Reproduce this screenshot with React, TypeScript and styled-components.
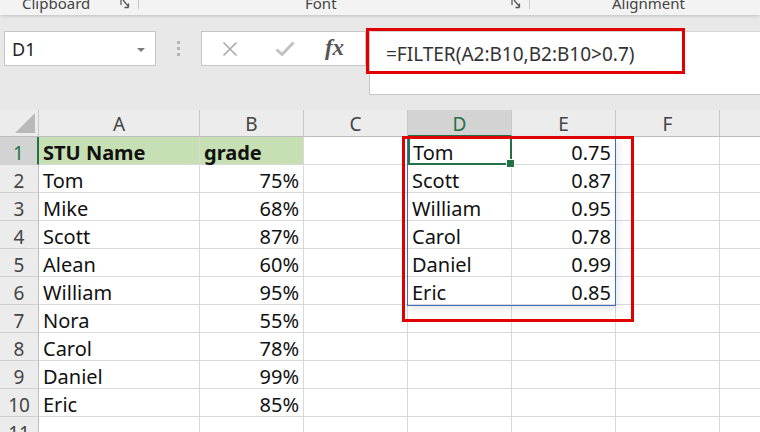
import styled, { createGlobalStyle } from "styled-components";

const GlobalStyle = createGlobalStyle`
  html, body {
    margin: 0;
    padding: 0;
    width: 760px;
    height: 432px;
    overflow: hidden;
    background: #ffffff;
  }
  * {
    box-sizing: border-box;
  }
`;

const FONT = `"Noto Sans", "Open Sans", sans-serif`;
const GREEN = "#217346";

const Page = styled.div`
  position: relative;
  width: 760px;
  height: 432px;
  overflow: hidden;
  font-family: ${FONT};
  background: #e8e8e8;
`;

/* ---------- ribbon group labels ---------- */

const RibbonStrip = styled.div`
  height: 15px;
  display: flex;
  overflow: hidden;
  background: #f3f3f3;
  box-shadow: 0 1px 3px rgba(0, 0, 0, 0.18);
  position: relative;
  z-index: 1;
`;

const Group = styled.div<{ $width?: number; $divider?: boolean }>`
  display: flex;
  align-items: flex-start;
  width: ${(p) => (p.$width ? `${p.$width}px` : "auto")};
  flex: ${(p) => (p.$width ? "none" : "1")};
  border-right: ${(p) => (p.$divider ? "1px solid #c8c8c8" : "none")};
  height: 9px;
`;

const GroupLabel = styled.span<{ $indent: number }>`
  margin-left: ${(p) => p.$indent}px;
  margin-top: -7px;
  font-size: 15px;
  line-height: 20px;
  color: #444;
  white-space: nowrap;
`;

const Launcher = styled.svg`
  margin-left: auto;
  margin-right: 8px;
  width: 10px;
  height: 9px;
  flex: none;
`;

const DialogLauncher = () => (
  <Launcher viewBox="0 0 10 9">
    <path d="M1 0 V5" stroke="#555" strokeWidth="1.2" fill="none" />
    <path d="M3 0 L8.5 6.5 M8.5 7.5 H4.5 M8.5 7.5 V3.5" stroke="#555" strokeWidth="1.3" fill="none" />
  </Launcher>
);

/* ---------- formula bar ---------- */

const FormulaBar = styled.div`
  height: 95px;
  display: flex;
  align-items: flex-start;
  padding-top: 16px;
  background: #e8e8e8;
`;

const NameBox = styled.div`
  margin-left: 4px;
  width: 152px;
  height: 35px;
  background: #fff;
  border: 1px solid #c6c6c6;
  display: flex;
  align-items: center;
  padding: 0 10px 0 7px;
  font-size: 18px;
  color: #222;
`;

const NameText = styled.span`
  flex: 1;
`;

const DropArrow = styled.span`
  width: 0;
  height: 0;
  border-left: 4px solid transparent;
  border-right: 4px solid transparent;
  border-top: 4px solid #7a7a7a;
  margin-top: 2px;
`;

const Grip = styled.div`
  width: 45px;
  height: 35px;
  display: flex;
  flex-direction: column;
  align-items: center;
  justify-content: center;
  gap: 3px;
`;

const GripDot = styled.span`
  width: 3px;
  height: 3px;
  background: #b5b5b5;
`;

const ButtonBox = styled.div`
  width: 165px;
  height: 35px;
  background: #fff;
  border: 1px solid #c6c6c6;
  display: grid;
  grid-template-columns: 55px 55px 1fr;
  align-items: center;
  justify-items: center;
`;

const FxText = styled.span`
  font-family: "Liberation Serif", "DejaVu Serif", serif;
  font-style: italic;
  font-weight: bold;
  font-size: 23px;
  color: #555;
  margin-left: -8px;
  margin-top: -2px;
`;

const FormulaInput = styled.div`
  margin-left: 3px;
  flex: 1;
  height: 64px;
  background: #fff;
  border-left: 1px solid #c6c6c6;
  border-bottom: 1px solid #c6c6c6;
  border-top: 1px solid #d6d6d6;
  padding: 9px 0 0 16px;
  font-size: 19px;
  line-height: 26px;
  color: #333;
  white-space: nowrap;
`;

/* ---------- sheet ---------- */

const SheetWrap = styled.div`
  position: relative;
`;

const Sheet = styled.div`
  display: grid;
  grid-template-columns: 39px 161px repeat(6, 104px);
  grid-template-rows: 27px repeat(11, 28px);
  background: #fff;
  font-size: 20px;
`;

const Corner = styled.div`
  background: #ececec;
  border-right: 1px solid #c8c8c8;
  border-bottom: 1px solid #bdbdbd;
  position: relative;
  &::after {
    content: "";
    position: absolute;
    right: 3px;
    bottom: 3px;
    width: 0;
    height: 0;
    border-left: 20px solid transparent;
    border-bottom: 20px solid #b9b9b9;
  }
`;

const ColHead = styled.div<{ $active?: boolean }>`
  background: ${(p) => (p.$active ? "#d3d3d3" : "#ececec")};
  color: ${(p) => (p.$active ? GREEN : "#444")};
  border-right: 1px solid #c8c8c8;
  border-bottom: ${(p) => (p.$active ? `2px solid ${GREEN}` : "1px solid #bdbdbd")};
  display: flex;
  align-items: center;
  justify-content: center;
  font-size: 19px;
  padding-top: 2px;
`;

const RowHead = styled.div<{ $active?: boolean }>`
  background: ${(p) => (p.$active ? "#d3d3d3" : "#ececec")};
  color: ${(p) => (p.$active ? GREEN : "#444")};
  border-right: ${(p) => (p.$active ? `2px solid ${GREEN}` : "1px solid #bdbdbd")};
  border-bottom: 1px solid #cfcfcf;
  text-align: center;
  font-size: 19px;
  line-height: 28px;
  padding-top: 2px;
`;

const Cell = styled.div<{ $align?: "left" | "right"; $fill?: string; $bold?: boolean }>`
  border-right: 1px solid #d9d9d9;
  border-bottom: 1px solid #d9d9d9;
  background: ${(p) => p.$fill ?? "transparent"};
  text-align: ${(p) => p.$align ?? "left"};
  font-weight: ${(p) => (p.$bold ? 700 : 400)};
  padding: 2px 4px 0;
  line-height: 28px;
  color: #111;
  white-space: nowrap;
`;

const ActiveCell = styled(Cell)`
  position: relative;
  outline: 2px solid ${GREEN};
  outline-offset: -2px;
  padding-left: 5px;
  z-index: 2;
  &::after {
    content: "";
    position: absolute;
    right: -4px;
    bottom: -4px;
    width: 7px;
    height: 7px;
    background: ${GREEN};
    border: 1px solid #fff;
  }
`;

const SpillFrame = styled.div`
  position: absolute;
  left: 407px;
  top: 27px;
  width: 209px;
  height: 169px;
  border: 1px solid #3d6cc4;
  box-shadow: 2px 3px 8px rgba(0, 0, 0, 0.1);
  pointer-events: none;
  z-index: 1;
`;

const Callout = styled.div<{ $x: number; $y: number; $w: number; $h: number }>`
  position: absolute;
  left: ${(p) => p.$x}px;
  top: ${(p) => p.$y}px;
  width: ${(p) => p.$w}px;
  height: ${(p) => p.$h}px;
  border: 3px solid #e10000;
  z-index: 5;
  pointer-events: none;
`;

const students: [string, string][] = [
  ["Tom", "75%"],
  ["Mike", "68%"],
  ["Scott", "87%"],
  ["Alean", "60%"],
  ["William", "95%"],
  ["Nora", "55%"],
  ["Carol", "78%"],
  ["Daniel", "99%"],
  ["Eric", "85%"],
];

const filtered: [string, string][] = [
  ["Tom", "0.75"],
  ["Scott", "0.87"],
  ["William", "0.95"],
  ["Carol", "0.78"],
  ["Daniel", "0.99"],
  ["Eric", "0.85"],
];

const columns = ["A", "B", "C", "D", "E", "F", "G"];

export default function App() {
  const rows = Array.from({ length: 11 }, (_, i) => i);

  return (
    <Page>
      <GlobalStyle />
      <RibbonStrip>
        <Group $width={139} $divider>
          <GroupLabel $indent={22}>Clipboard</GroupLabel>
          <DialogLauncher />
        </Group>
        <Group $width={391} $divider>
          <GroupLabel $indent={166}>Font</GroupLabel>
          <DialogLauncher />
        </Group>
        <Group>
          <GroupLabel $indent={82}>Alignment</GroupLabel>
        </Group>
      </RibbonStrip>

      <FormulaBar>
        <NameBox>
          <NameText>D1</NameText>
          <DropArrow />
        </NameBox>
        <Grip>
          <GripDot />
          <GripDot />
          <GripDot />
        </Grip>
        <ButtonBox>
          <svg width="16" height="16" viewBox="0 0 16 16">
            <path d="M1.5 1.5 L14.5 14.5 M14.5 1.5 L1.5 14.5" stroke="#a9a9a9" strokeWidth="1.6" fill="none" />
          </svg>
          <svg width="20" height="16" viewBox="0 0 20 16">
            <path d="M1.5 8.5 L7 13.5 L18.5 1.5" stroke="#c2c2c2" strokeWidth="3" fill="none" strokeLinejoin="round" />
          </svg>
          <FxText>fx</FxText>
        </ButtonBox>
        <FormulaInput>=FILTER(A2:B10,B2:B10&gt;0.7)</FormulaInput>
      </FormulaBar>

      <SheetWrap>
        <Sheet>
          <Corner />
          {columns.map((c) => (
            <ColHead key={c} $active={c === "D"}>
              {c}
            </ColHead>
          ))}

          {rows.map((r) => {
            const student = r >= 1 && r <= 9 ? students[r - 1] : null;
            const spill = r <= 5 ? filtered[r] : null;
            const header = r === 0;
            return [
              <RowHead key={`h${r}`} $active={header}>
                {r + 1}
              </RowHead>,
              <Cell key={`a${r}`} $fill={header ? "#c6e0b4" : undefined} $bold={header}>
                {header ? "STU Name" : student?.[0]}
              </Cell>,
              <Cell
                key={`b${r}`}
                $align={header ? "left" : "right"}
                $fill={header ? "#c6e0b4" : undefined}
                $bold={header}
              >
                {header ? "grade" : student?.[1]}
              </Cell>,
              <Cell key={`c${r}`} />,
              header ? (
                <ActiveCell key={`d${r}`}>{spill?.[0]}</ActiveCell>
              ) : (
                <Cell key={`d${r}`}>{spill?.[0]}</Cell>
              ),
              <Cell key={`e${r}`} $align="right">
                {spill?.[1]}
              </Cell>,
              <Cell key={`f${r}`} />,
              <Cell key={`g${r}`} />,
            ];
          })}
        </Sheet>
        <SpillFrame />
      </SheetWrap>

      <Callout $x={366} $y={28} $w={319} $h={46} />
      <Callout $x={402} $y={136} $w={232} $h={186} />
    </Page>
  );
}
